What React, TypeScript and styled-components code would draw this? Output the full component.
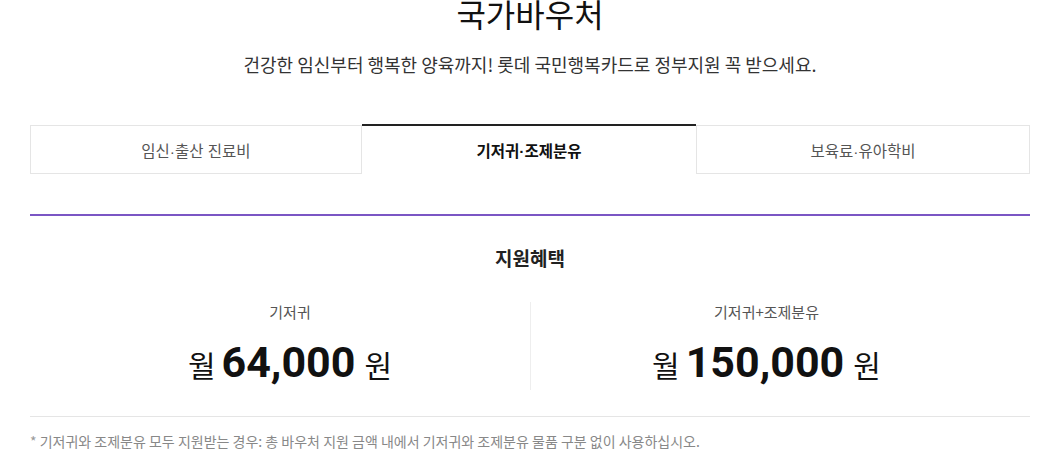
import React, { useState } from "react";
import styled, { createGlobalStyle } from "styled-components";

const GlobalStyle = createGlobalStyle`
	body {
		margin: 0;
		background: #fff;
		font-family: "Noto Sans CJK KR", "Noto Sans", sans-serif;
		color: #222;
	}
`;

const tabs = ["임신·출산 진료비", "기저귀·조제분유", "보육료·유아학비"];

const benefits = [
	{ label: "기저귀", amount: "64,000" },
	{ label: "기저귀+조제분유", amount: "150,000" },
];

export default function App() {
	const [active, setActive] = useState<number>(1);
	return (
		<Page>
			<GlobalStyle />
			<Title>국가바우처</Title>
			<Subtitle>건강한 임신부터 행복한 양육까지! 롯데 국민행복카드로 정부지원 꼭 받으세요.</Subtitle>
			<TabList>
				{tabs.map((t, i) => (
					<Tab key={t} $active={i === active} onClick={() => setActive(i)}>
						{t}
					</Tab>
				))}
			</TabList>
			<Panel>
				<PanelTitle>지원혜택</PanelTitle>
				<BenefitRow>
					{benefits.map((b) => (
						<Benefit key={b.label}>
							<BenefitLabel>{b.label}</BenefitLabel>
							<Amount>
								<Unit>월</Unit>
								<Num>{b.amount}</Num>
								<Unit $after>원</Unit>
							</Amount>
						</Benefit>
					))}
				</BenefitRow>
				<Note>
					<Star>*</Star> 기저귀와 조제분유 모두 지원받는 경우: 총 바우처 지원 금액 내에서 기저귀와 조제분유 물품 구분 없이 사용하십시오.
				</Note>
			</Panel>
		</Page>
	);
}

const Page = styled.div`
	width: 1000px;
	margin-left: 30px;
`;

const Title = styled.h1`
	margin: -9px 0 0;
	font-size: 32px;
	font-weight: 400;
	line-height: 44px;
	text-align: center;
	color: #111;
`;

const Subtitle = styled.p`
	margin: 16px 0 0;
	font-size: 18px;
	line-height: 26px;
	text-align: center;
	color: #333;
`;

const TabList = styled.div`
	display: grid;
	grid-template-columns: 332px 334px 334px;
	margin-top: 48px;
`;

const Tab = styled.button<{ $active: boolean }>`
	height: 49px;
	padding: 0;
	background: #fff;
	font-family: "Liberation Sans", "Noto Sans CJK KR", sans-serif;
	font-size: 15.5px;
	cursor: pointer;
	border: 1px solid #e5e5e5;
	color: #555;
	${(p) =>
		p.$active &&
		`
		border: none;
		border-top: 2px solid #222;
		margin-top: -1px;
		height: 50px;
		font-weight: 700;
		color: #111;
	`}
`;

const Panel = styled.section`
	margin-top: 40px;
	border-top: 2px solid #7b56c4;
`;

const PanelTitle = styled.h2`
	margin: 28px 0 0;
	font-size: 19px;
	font-weight: 700;
	line-height: 28px;
	text-align: center;
	color: #222;
`;

const BenefitRow = styled.div`
	display: grid;
	grid-template-columns: 480px 472px;
	margin-top: 30px;
	padding: 0 0 26px 20px;
	border-bottom: 1px solid #e5e5e5;
`;

const Benefit = styled.div`
	display: flex;
	flex-direction: column;
	align-items: center;
	& + & {
		border-left: 1px solid #eee;
	}
`;

const BenefitLabel = styled.div`
	font-size: 15px;
	line-height: 20px;
	color: #555;
`;

const Amount = styled.div`
	display: flex;
	align-items: baseline;
	margin-top: 12px;
	color: #111;
`;

const Unit = styled.span<{ $after?: boolean }>`
	font-size: 30px;
	margin: ${(p) => (p.$after ? "0 0 0 9px" : "0 6px 0 0")};
`;

const Num = styled.span`
	font-family: Roboto, "Noto Sans", sans-serif;
	font-size: 43px;
	font-weight: 700;
	line-height: 56px;
`;

const Note = styled.p`
	margin: 14px 0 0;
	font-size: 14px;
	line-height: 20px;
	color: #888;
`;

const Star = styled.span`
	color: #999;
`;
